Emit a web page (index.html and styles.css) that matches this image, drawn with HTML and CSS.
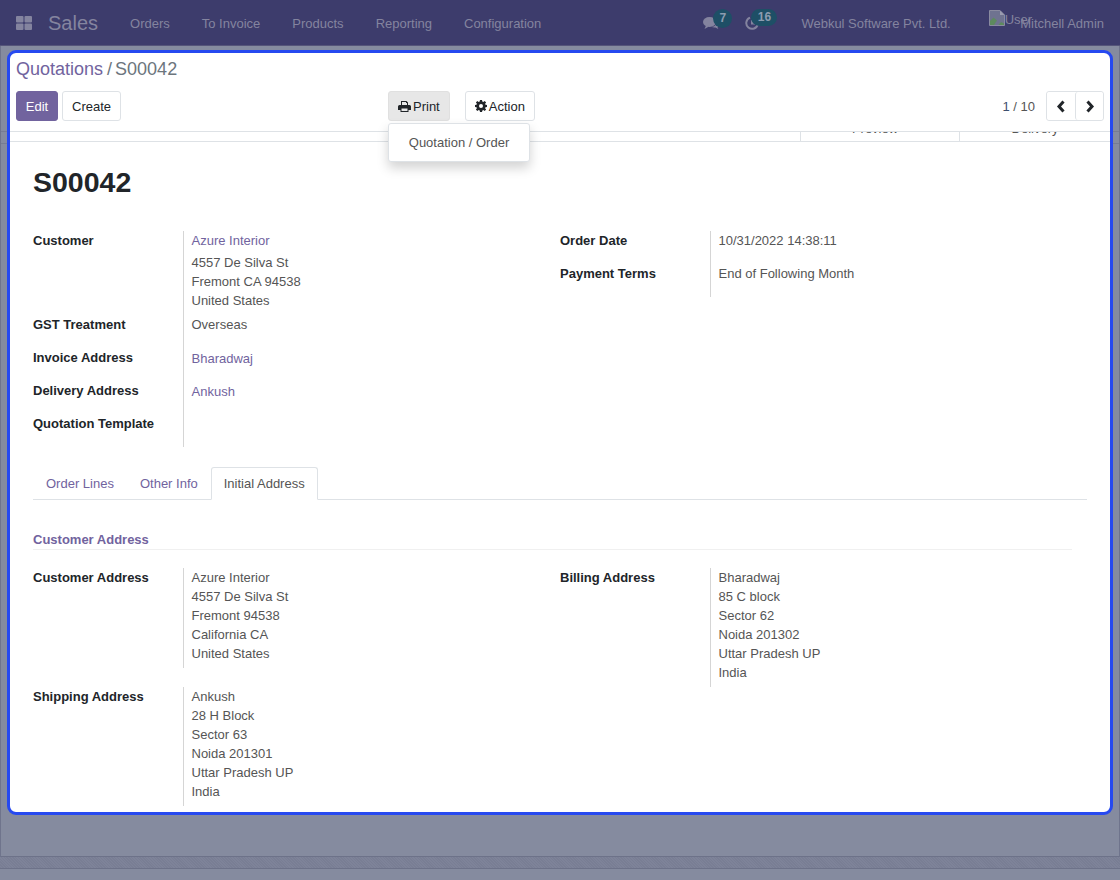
FILE: index.html
```html
<!DOCTYPE html>
<html lang="en">
<head>
<meta charset="utf-8">
<title>S00042 - Sales</title>
<link rel="stylesheet" href="styles.css">
</head>
<body>
<nav class="nav">
  <svg class="apps" width="18" height="16" viewBox="0 0 18 16"><rect x="1" y="1" width="7.5" height="6.5" rx="1"/><rect x="9.5" y="1" width="7.5" height="6.5" rx="1"/><rect x="1" y="8.5" width="7.5" height="6.5" rx="1"/><rect x="9.5" y="8.5" width="7.5" height="6.5" rx="1"/></svg>
  <span class="brand">Sales</span>
  <ul class="menu">
    <li>Orders</li><li>To Invoice</li><li>Products</li><li>Reporting</li><li>Configuration</li>
  </ul>
  <div class="systray">
    <div class="tray chat">
      <svg width="16" height="14" viewBox="0 0 16 14"><ellipse cx="6.5" cy="6" rx="6.5" ry="5"/><path d="M3 9.5 1.5 13 6 10.5z"/><path d="M13.5 5.2c1.6.8 2.5 2 2.5 3.2 0 1-.6 1.9-1.5 2.5l.8 2.1-3-1.6c-1.3.2-2.8 0-3.9-.7 3 0 5.9-2 5.1-5.5z"/></svg>
      <span class="badge round">7</span>
    </div>
    <div class="tray clock">
      <svg width="14" height="14" viewBox="0 0 14 14" fill="none"><path d="M5 1.6A5.8 5.8 0 1 0 12.8 8"/><path d="M7 4v3.5h3"/></svg>
      <span class="badge pill">16</span>
    </div>
    <span class="company">Webkul Software Pvt. Ltd.</span>
    <span class="user">
      <span class="broken"><svg width="16" height="16" viewBox="0 0 16 16"><path class="b1" d="M.5.5h10.500l4.500 4.500v10.500H.5z"/><path class="b2" d="M1 15V11l3.500-3.500L8 10.500 5 15z"/><path class="b2" d="M9.500 15l2.500-3 3 1.500V15z"/><path class="b3" d="M11 .5v4.500h4.500z"/></svg><span class="alt">User</span></span>
      <span class="uname">Mitchell Admin</span>
    </span>
  </div>
</nav>

<div class="stage">
  <div class="frame">
    <main class="card">
      <header class="cp">
        <div class="crumbs"><a class="link">Quotations</a><span class="sep">/</span><span class="cur">S00042</span></div>
        <div class="cp-row">
          <div class="btns-left">
            <button class="btn primary">Edit</button>
            <button class="btn">Create</button>
          </div>
          <div class="btns-mid">
            <div class="dd">
              <button class="btn open">
                <svg width="13" height="12" viewBox="0 0 13 12"><path d="M3 1h5.500L10 2.500V5H9V3H8V2H4v3H3z"/><path fill-rule="evenodd" d="M1.500 5h10A1.500 1.500 0 0 1 13 6.500V10h-2.500v2h-8v-2H0V6.500A1.500 1.500 0 0 1 1.500 5zM3.500 8.500v2.500h6V8.500z"/></svg>
                Print
              </button>
              <div class="menu-pop">Quotation / Order</div>
            </div>
            <button class="btn">
              <svg width="12" height="12" viewBox="0 0 12 12"><path fill-rule="evenodd" d="M5 0h2l.3 1.600 1 .4L9.700 1l1.400 1.400-1 1.300.4 1L12 5v2l-1.500.3-.4 1 1 1.300-1.400 1.400-1.300-1-1 .4L7 12H5l-.3-1.600-1-.4-1.400 1L.9 9.600l1-1.300-.4-1L0 7V5l1.500-.3.4-1-1-1.300L2.300 1l1.400 1 1-.4zM6 4a2 2 0 1 0 0 4 2 2 0 0 0 0-4z"/></svg>
              Action
            </button>
          </div>
          <div class="pager">
            <span class="count"><span class="cur-num">1</span> / 10</span>
            <div class="pager-btns">
              <button class="pbtn"><svg width="10" height="13" viewBox="0 0 10 13"><path d="M7.500 1.500 3 6.500l4.500 5"/></svg></button>
              <button class="pbtn"><svg width="10" height="13" viewBox="0 0 10 13"><path d="M2.500 1.500 7 6.500l-4.500 5"/></svg></button>
            </div>
          </div>
        </div>
      </header>

      <div class="stats">
        <div class="stat s1"><span>Preview</span></div>
        <div class="stat s2"><span>Delivery</span></div>
      </div>

      <section class="sheet">
        <h1 class="title">S00042</h1>
        <div class="group-top">
          <dl class="fields main-fields">
            <dt class="h-customer">Customer</dt>
            <dd class="h-customer"><a class="link">Azure Interior</a><div class="addr">4557 De Silva St<br>Fremont CA 94538<br>United States</div></dd>
            <dt class="h-gst">GST Treatment</dt>
            <dd class="h-gst">Overseas</dd>
            <dt class="h-row">Invoice Address</dt>
            <dd class="h-row"><a class="link">Bharadwaj</a></dd>
            <dt class="h-row">Delivery Address</dt>
            <dd class="h-row"><a class="link">Ankush</a></dd>
            <dt class="h-row">Quotation Template</dt>
            <dd class="h-last"></dd>
          </dl>
          <dl class="fields">
            <dt class="h-date">Order Date</dt>
            <dd class="h-date">10/31/2022 14:38:11</dd>
            <dt class="h-terms">Payment Terms</dt>
            <dd class="h-terms">End of Following Month</dd>
          </dl>
        </div>

        <div class="tabs">
          <span class="tab">Order Lines</span>
          <span class="tab">Other Info</span>
          <span class="tab active">Initial Address</span>
        </div>

        <h2 class="sec">Customer Address</h2>

        <div class="addr-grid">
          <div class="addr-col">
            <dl class="afield">
              <dt>Customer Address</dt>
              <dd>Azure Interior<br>4557 De Silva St<br>Fremont 94538<br>California CA<br>United States</dd>
            </dl>
            <dl class="afield">
              <dt>Shipping Address</dt>
              <dd>Ankush<br>28 H Block<br>Sector 63<br>Noida 201301<br>Uttar Pradesh UP<br>India</dd>
            </dl>
          </div>
          <div class="addr-col">
            <dl class="afield">
              <dt>Billing Address</dt>
              <dd>Bharadwaj<br>85 C block<br>Sector 62<br>Noida 201302<br>Uttar Pradesh UP<br>India</dd>
            </dl>
          </div>
        </div>
      </section>
    </main>
  </div>
  <div class="strip"></div>
</div>
</body>
</html>
```

FILE: styles.css
```css
* { box-sizing: border-box; }
html, body { margin: 0; height: 880px; overflow: hidden; }
body {
  background: #858b9f;
  font-family: "Liberation Sans", Arial, sans-serif;
  font-size: 13px;
  line-height: 19px;
  color: #555;
}
dl, dd, dt, ul, h1, h2 { margin: 0; padding: 0; }
button { font: inherit; cursor: pointer; }
.link { color: #71639e; }

/* navbar */
.nav {
  height: 46px;
  background: #3d3c6c;
  border-bottom: 1px solid #55557a;
  display: flex;
  align-items: center;
  color: #84849f;
  padding-right: 16px;
}
.apps { margin-left: 15px; fill: #84849f; flex: none; }
.brand { font-size: 20px; margin-left: 15px; line-height: 46px; }
.menu { list-style: none; display: flex; gap: 32px; margin-left: 32px; line-height: 46px; padding-top: 2px; }
.systray { margin-left: auto; display: flex; align-items: center; height: 46px; }
.tray { position: relative; height: 46px; width: 40px; }
.tray svg { position: absolute; left: 0; top: 16px; fill: #84849f; }
.clock svg { left: 2px; stroke: #84849f; stroke-width: 2; fill: none; }
.clock { width: 58px; }
.badge {
  position: absolute;
  background: #1e4f66;
  color: #8c9cb0;
  font-size: 12px;
  font-weight: 700;
  line-height: 17px;
  text-align: center;
}
.round { left: 10px; top: 9px; width: 19px; height: 19px; line-height: 19px; border-radius: 50%; }
.pill { left: 8px; top: 9px; width: 26px; height: 17px; border-radius: 9px; }
.company { margin-right: 38px; line-height: 46px; padding-top: 2px; }
.user { display: flex; align-items: center; line-height: 46px; padding-top: 2px; }
.broken { display: flex; align-items: flex-start; height: 46px; padding-top: 9px; line-height: 19px; margin-right: -12px; }
.broken svg { flex: none; }
.b1 { fill: #6f7390; stroke: #8a8ba0; }
.b2 { fill: #5d8a5e; }
.b3 { fill: #9a9bb0; }

/* layout behind the card */
.stage { height: 834px; }
.frame {
  position: relative;
  height: 811px;
  border-left: 1px solid #6f748c;
  border-right: 1px solid #6f748c;
  border-bottom: 1px solid #6d7289;
  padding: 4px 6px 0;
}
.frame::before {
  content: "";
  position: absolute;
  left: 0;
  right: 0;
  top: 85px;
  height: 11px;
  border-top: 1px solid #777c92;
  border-bottom: 1px solid #777c92;
}
.strip {
  height: 12px;
  border-bottom: 1px solid #6d7289;
  background-color: #7c8197;
  background-image: repeating-linear-gradient(45deg, #797e94 0 1px, #7e8399 1px 2px);
}

/* card */
.card {
  height: 765px;
  background: #fff;
  border: 3px solid #2649f0;
  border-radius: 9px;
  overflow: hidden;
  position: relative;
}

/* control panel */
.cp { height: 79px; padding: 5px 6px 0; border-bottom: 1px solid #dee2e6; }
.crumbs { font-size: 18px; line-height: 22px; display: flex; color: #6c757d; }
.sep { margin: 0 3px 0 4px; }
.cp-row { display: flex; align-items: center; margin-top: 11px; height: 30px; }
.btn {
  height: 30px;
  padding: 0 9px;
  border: 1px solid #dee2e6;
  border-radius: 3px;
  background: #fff;
  color: #212529;
  display: flex;
  align-items: center;
  gap: 2px;
  white-space: nowrap;
}
.btn svg { fill: #212529; flex: none; }
.btn.primary { background: #71639e; border-color: #71639e; color: #fff; width: 42px; justify-content: center; }
.btn.open { background: #e7e7e7; border-color: #e0e0e0; }
.btns-left { display: flex; gap: 4px; width: 372px; }
.btns-mid { display: flex; gap: 15px; }
.dd { position: relative; }
.menu-pop {
  position: absolute;
  left: 0;
  top: 32px;
  width: 142px;
  height: 39px;
  background: #fff;
  border: 1px solid #dee2e6;
  border-radius: 3px;
  box-shadow: 0 6px 12px rgba(0, 0, 0, .175);
  line-height: 37px;
  text-align: center;
  white-space: nowrap;
  z-index: 3;
}
.pager { margin-left: auto; display: flex; align-items: center; gap: 11px; }
.cur-num { color: #3d4f6e; }
.pager-btns { display: flex; height: 30px; border: 1px solid #dee2e6; border-radius: 3px; }
.pbtn { width: 28px; padding: 0; border: 0; background: #fff; display: flex; align-items: center; justify-content: center; border-radius: 3px; }
.pbtn + .pbtn { border-left: 1px solid #dee2e6; width: 28px; }
.pbtn svg { fill: none; stroke: #212529; stroke-width: 3; }

/* stat buttons, clipped */
.stats {
  height: 10px;
  border-bottom: 1px solid #dee2e6;
  display: flex;
  justify-content: flex-end;
  overflow: hidden;
}
.stat { height: 10px; border-left: 1px solid #dee2e6; text-align: center; position: relative; }
.s1 { width: 159px; }
.s2 { width: 151px; }
.stat span { position: absolute; left: 0; right: 0; top: -13px; }
.s1 span { right: 10px; }

/* sheet */
.sheet { padding: 23px 23px 0; }
.title { font-size: 28.500px; line-height: 35px; font-weight: 700; color: #212529; }
.group-top { display: grid; grid-template-columns: 527px 1fr; margin-top: 31px; align-items: start; }
.fields { display: grid; grid-template-columns: 150px 1fr; }
.fields dt { font-weight: 700; color: #212529; }
.fields dd { border-left: 1px solid #d5d5d5; padding-left: 7.500px; }
.fields dd.h-row { padding-top: 1px; }
.h-customer { height: 84px; }
.addr { margin-top: 3px; }
.h-gst, .h-row, .h-last, .h-date, .h-terms { height: 33px; }

.tabs {
  display: flex;
  height: 33px;
  margin-top: 20px;
  border-bottom: 1px solid #dee2e6;
  color: #71639e;
}
.tab { padding: 7px 13px 0; height: 33px; }
.tab.active {
  background: #fff;
  color: #555;
  border: 1px solid #dee2e6;
  border-bottom-color: #fff;
  border-radius: 3px 3px 0 0;
  padding: 6px 12px 0;
}
.sec {
  margin-top: 30px;
  margin-right: 15px;
  font-size: 13px;
  line-height: 19px;
  font-weight: 700;
  color: #71639e;
  border-bottom: 1px solid #f0f0f0;
}
.addr-grid { display: grid; grid-template-columns: 527px 1fr; margin-top: 18px; align-items: start; }
.addr-col { display: flex; flex-direction: column; gap: 19px; }
.afield { display: grid; grid-template-columns: 150px 1fr; }
.afield dt { font-weight: 700; color: #212529; }
.afield dd { border-left: 1px solid #d5d5d5; padding: 0 0 5px 7.500px; }
```
